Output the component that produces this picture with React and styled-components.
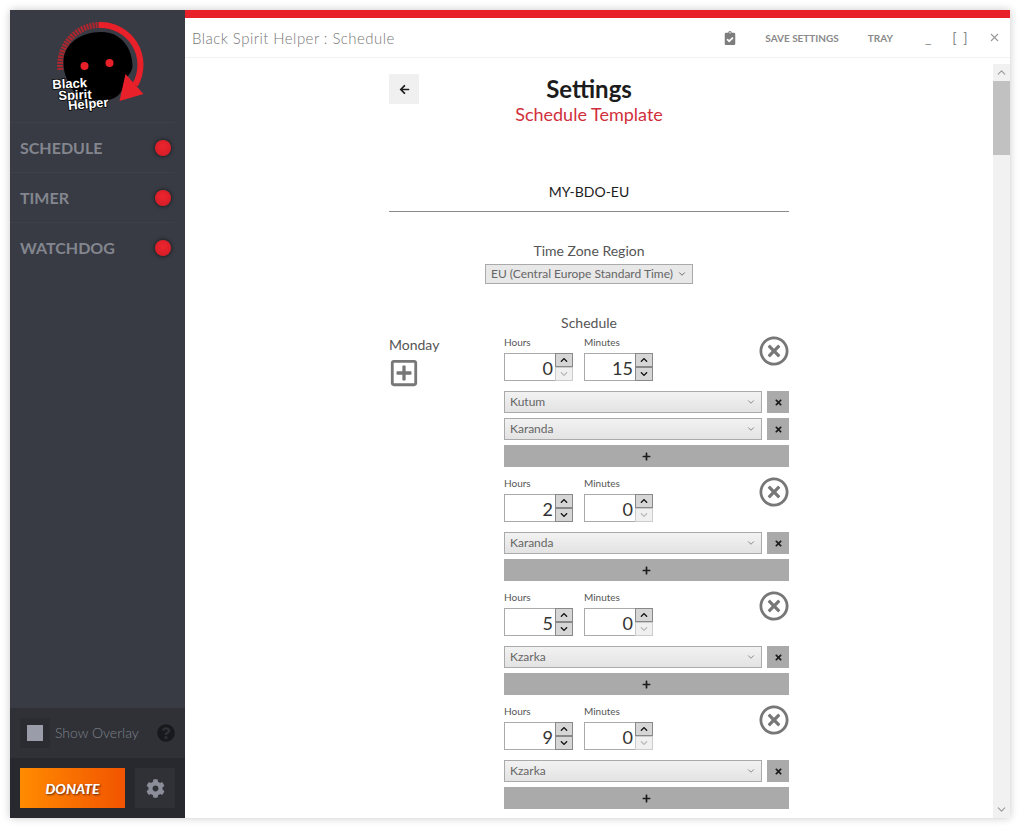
import React from 'react';
import styled, { createGlobalStyle } from 'styled-components';
import {
  FaArrowLeft, FaChevronDown, FaChevronUp, FaClipboardCheck, FaCog, FaPlus,
  FaQuestionCircle, FaRegPlusSquare, FaRegTimesCircle, FaTimes,
} from 'react-icons/fa';
import { ChevronDown, ChevronUp, X } from 'lucide-react';

const GlobalStyle = createGlobalStyle`
  html, body {
    margin: 0;
    height: 828px;
    overflow: hidden;
    background: #fff;
    font-family: Lato, "Open Sans", sans-serif;
  }
  * { box-sizing: border-box; }
`;

const Frame = styled.div`
  padding: 10px;
  height: 828px;
`;

const Win = styled.div`
  display: flex;
  height: 808px;
  background: #fff;
  box-shadow: 0 0 8px rgba(0, 0, 0, 0.22);
`;

const Sidebar = styled.aside`
  width: 175px;
  flex: none;
  display: flex;
  flex-direction: column;
  background: #383b43;
`;

const LogoBox = styled.div`
  height: 112px;
  display: flex;
  justify-content: center;
`;

const NavItem = styled.div`
  height: 50px;
  width: 165px;
  display: flex;
  align-items: center;
  padding-left: 10px;
  border-top: 1px solid #3d4048;
  font-size: 16px;
  font-weight: 700;
  color: #83868f;
`;

const Dot = styled.span`
  width: 16px;
  height: 16px;
  margin-left: auto;
  margin-right: 4px;
  border-radius: 50%;
  background: radial-gradient(circle at 50% 40%, #ec252e, #d01a24);
  box-shadow: 0 0 4px rgba(0, 0, 0, 0.7);
`;

const Spacer = styled.div`
  flex: 1;
`;

const OverlayRow = styled.div`
  height: 50px;
  display: flex;
  align-items: center;
  padding: 0 10px 1px;
  background: #2f3137;
  color: #7f828a;
  font-size: 14px;
  font-weight: 300;
`;

const CheckWrap = styled.div`
  width: 30px;
  height: 30px;
  margin-right: 5px;
  display: flex;
  align-items: center;
  justify-content: center;
  background: #2a2c31;
`;

const CheckInner = styled.div`
  width: 16px;
  height: 16px;
  background: #9a9da9;
`;

const HelpIcon = styled(FaQuestionCircle)`
  margin-left: auto;
  color: #18191c;
`;

const DonateRow = styled.div`
  height: 60px;
  display: flex;
  align-items: center;
  gap: 10px;
  padding: 0 10px;
  background: #27292e;
`;

const Donate = styled.div`
  width: 105px;
  height: 40px;
  display: flex;
  align-items: center;
  justify-content: center;
  background: linear-gradient(90deg, #ff8b00, #f25400);
  color: #fff;
  font-size: 14px;
  font-weight: 900;
  font-style: italic;
  text-shadow: 1px 1px 2px rgba(60, 20, 0, 0.8);
`;

const GearBtn = styled.div`
  width: 40px;
  height: 40px;
  display: flex;
  align-items: center;
  justify-content: center;
  background: #2f3137;
  color: #8b8e99;
`;

const Main = styled.main`
  flex: 1;
  min-width: 0;
  display: flex;
  flex-direction: column;
  border-top: 8px solid #e8202a;
`;

const TitleBar = styled.header`
  height: 40px;
  flex: none;
  display: flex;
  align-items: center;
  padding-left: 7px;
  border-bottom: 1px solid #f1f1f1;
  color: #8a8a8a;
`;

const Title = styled.div`
  font-size: 15px;
  font-weight: 300;
  letter-spacing: 0.45px;
  color: #777;
  margin-right: auto;
`;

const TitleAction = styled.span`
  font-size: 10px;
  font-weight: 700;
  color: #8a8a8a;
  margin-left: ${p => p.$gap}px;
`;

const WinGlyph = styled.span`
  font-size: 14px;
  font-weight: 400;
  letter-spacing: ${p => p.$track || 0}px;
  color: #888;
  margin-left: ${p => p.$gap}px;
`;

const ClipIcon = styled(FaClipboardCheck)`
  color: #7d7d7d;
`;

const CloseWin = styled(X)`
  color: #999;
  margin: 0 9px 0 19px;
`;

const Body = styled.div`
  flex: 1;
  min-height: 0;
  display: flex;
  overflow: hidden;
`;

const Content = styled.div`
  flex: 1;
  min-width: 0;
  display: flex;
  justify-content: center;
`;

const Column = styled.div`
  width: 400px;
  flex: none;
  padding-top: 16px;
`;

const Header = styled.div`
  height: 93px;
  position: relative;
  text-align: center;
`;

const BackBtn = styled.div`
  position: absolute;
  left: 0;
  top: 0;
  width: 30px;
  height: 30px;
  display: flex;
  align-items: center;
  justify-content: center;
  background: #f0f0f0;
  color: #1e1e1e;
`;

const PageTitle = styled.h1`
  margin: 0;
  font-size: 24px;
  line-height: 30px;
  font-weight: 700;
  color: #1c1c1c;
`;

const SubTitle = styled.div`
  font-size: 18px;
  line-height: 20px;
  color: #d0303c;
`;

const TemplateName = styled.div`
  height: 45px;
  padding-top: 13px;
  border-bottom: 1px solid #8a8a8a;
  text-align: center;
  font-size: 14px;
  line-height: 24px;
  color: #1c1c1c;
`;

const Section = styled.div`
  margin-top: 28px;
  display: flex;
  flex-direction: column;
  align-items: center;
  font-size: 14px;
  line-height: 22px;
  color: #555;
`;

const FakeSelect = styled.div`
  height: ${p => p.$h}px;
  flex: ${p => (p.$wide ? 1 : 'none')};
  display: flex;
  align-items: center;
  justify-content: space-between;
  padding: 0 5px;
  border: 1px solid #aaa;
  background: ${p => (p.$wide ? 'linear-gradient(180deg, #f2f2f2, #e3e3e3)' : '#e8e8e8')};
  color: #666;
  font-size: 12px;
  line-height: 1;
`;

const ZoneSelect = styled(FakeSelect)`
  width: 208px;
  margin-top: 2px;
  gap: 4px;
`;

const Day = styled.div`
  margin-top: 28px;
  display: flex;
`;

const DayLabel = styled.div`
  width: 115px;
  flex: none;
  padding-top: 22px;
  font-size: 14px;
  line-height: 22px;
  color: #555;
`;

const AddDay = styled(FaRegPlusSquare)`
  display: block;
  margin-top: 2px;
  color: #777;
`;

const Slots = styled.div`
  flex: 1;
  min-width: 0;
`;

const SlotsHead = styled.div`
  text-align: center;
  margin-left: -115px;
  margin-bottom: 1px;
  font-size: 14px;
  line-height: 22px;
  color: #555;
`;

const Slot = styled.div`
  margin-bottom: 9px;
`;

const TimeRow = styled.div`
  display: flex;
  align-items: flex-start;
  margin-bottom: 10px;
  gap: 11px;
`;

const TimeField = styled.div`
  width: 69px;
  font-size: 10px;
  line-height: 14px;
  color: #555;
`;

const TimeBox = styled.div`
  height: 28px;
  margin-top: 4px;
  display: flex;
  border: 1px solid #aaa;
`;

const TimeValue = styled.div`
  flex: 1;
  padding: 1px 2px 0 0;
  text-align: right;
  font-size: 18px;
  line-height: 26px;
  color: #333;
`;

const Spin = styled.div`
  width: 18px;
  flex: none;
  margin: -1px -1px -1px 0;
  display: flex;
  flex-direction: column;
`;

const SpinBtn = styled.div`
  flex: 1;
  display: flex;
  align-items: center;
  justify-content: center;
  border: 1px solid ${p => (p.$off ? '#ccc' : '#888')};
  background: ${p => (p.$off ? '#f0f0f0' : '#d6d6d6')};
  color: ${p => (p.$off ? '#bbb' : '#111')};
`;

const RemoveSlot = styled(FaRegTimesCircle)`
  margin-left: auto;
  margin-top: 1px;
  color: #777;
`;

const MobRow = styled.div`
  display: flex;
  gap: 5px;
  margin-bottom: 5px;
`;

const SmallBtn = styled.div`
  width: 22px;
  height: 22px;
  flex: none;
  display: flex;
  align-items: center;
  justify-content: center;
  background: #aaa;
  color: #1c1c1c;
`;

const AddBtn = styled.div`
  height: 22px;
  display: flex;
  align-items: center;
  justify-content: center;
  background: #aaa;
  color: #1c1c1c;
`;

const Scroll = styled.div`
  width: 17px;
  flex: none;
  margin-top: 6px;
  display: flex;
  flex-direction: column;
  background: #f1f1f1;
  color: #9a9a9a;
`;

const ScrollArrow = styled.div`
  height: 17px;
  flex: none;
  display: flex;
  align-items: center;
  justify-content: center;
`;

const Thumb = styled.div`
  height: 74px;
  background: #c1c1c1;
`;

// drawn in page coordinates, the svg sits at x 47.5, y 20
const Logo = () => (
  <svg width="100" height="100" viewBox="47.5 20 100 100" style={{ marginTop: 10 }}>
    <path d="M97 25 A40 40 0 0 0 60 70" fill="none" stroke="#b0262f" strokeWidth="6" strokeDasharray="2 1" />
    <path
      d="M100 32 C118 31 132 46 132 66 C132 72 125 78 124 82 C122 92 118 98 108 100 L80 100 C70 88 62 76 63 60 C64 44 80 32 100 32 Z"
      fill="#000"
    />
    <circle cx="84" cy="66" r="4" fill="#e8202a" />
    <circle cx="109" cy="63" r="4" fill="#e8202a" />
    <path d="M98 25 A40 40 0 0 1 134.6 85" fill="none" stroke="#e8202a" strokeWidth="6" />
    <path d="M119 101 L143 94 L125 74 Z" fill="#e8202a" />
    <g
      fontFamily="'Liberation Sans', sans-serif"
      fontSize="13"
      fontWeight="700"
      fill="#fff"
      stroke="#000"
      strokeWidth="1.5"
      paintOrder="stroke"
    >
      <text x="52" y="89" transform="rotate(-3 52 89)">Black</text>
      <text x="58" y="100" transform="rotate(-2 58 100)">Spirit</text>
      <text x="68" y="110" transform="rotate(-5 68 110)">Helper</text>
    </g>
  </svg>
);

const schedule = [
  { h: 0, m: 15, mobs: ['Kutum', 'Karanda'] },
  { h: 2, m: 0, mobs: ['Karanda'] },
  { h: 5, m: 0, mobs: ['Kzarka'] },
  { h: 9, m: 0, mobs: ['Kzarka'] },
];

const TimeInput = ({ label, value, max }) => (
  <TimeField>
    {label}
    <TimeBox>
      <TimeValue>{value}</TimeValue>
      <Spin>
        <SpinBtn $off={value >= max}><FaChevronUp size={8} /></SpinBtn>
        <SpinBtn $off={value <= 0}><FaChevronDown size={8} /></SpinBtn>
      </Spin>
    </TimeBox>
  </TimeField>
);

export default function App() {
  return (
    <>
      <GlobalStyle />
      <Frame>
        <Win>
          <Sidebar>
            <LogoBox><Logo /></LogoBox>
            {['SCHEDULE', 'TIMER', 'WATCHDOG'].map(name => (
              <NavItem key={name}>{name}<Dot /></NavItem>
            ))}
            <Spacer />
            <OverlayRow>
              <CheckWrap><CheckInner /></CheckWrap>
              Show Overlay
              <HelpIcon size={18} />
            </OverlayRow>
            <DonateRow>
              <Donate>DONATE</Donate>
              <GearBtn><FaCog size={19} /></GearBtn>
            </DonateRow>
          </Sidebar>
          <Main>
            <TitleBar>
              <Title>Black Spirit Helper : Schedule</Title>
              <ClipIcon size={14} />
              <TitleAction $gap={28}>SAVE SETTINGS</TitleAction>
              <TitleAction $gap={29}>TRAY</TitleAction>
              <WinGlyph $gap={32}>_</WinGlyph>
              <WinGlyph $gap={21} $track={1.5}>[ ]</WinGlyph>
              <CloseWin size={13} />
            </TitleBar>
            <Body>
              <Content>
                <Column>
                  <Header>
                    <BackBtn><FaArrowLeft size={11} /></BackBtn>
                    <PageTitle>Settings</PageTitle>
                    <SubTitle>Schedule Template</SubTitle>
                  </Header>
                  <TemplateName>MY-BDO-EU</TemplateName>
                  <Section>
                    Time Zone Region
                    <ZoneSelect $h={20}>
                      EU (Central Europe Standard Time)
                      <ChevronDown size={10} color="#555" />
                    </ZoneSelect>
                  </Section>
                  <Day>
                    <DayLabel>
                      Monday
                      <AddDay size={30} />
                    </DayLabel>
                    <Slots>
                      <SlotsHead>Schedule</SlotsHead>
                      {schedule.map((slot, i) => (
                        <Slot key={i}>
                          <TimeRow>
                            <TimeInput label="Hours" value={slot.h} max={23} />
                            <TimeInput label="Minutes" value={slot.m} max={59} />
                            <RemoveSlot size={30} />
                          </TimeRow>
                          {slot.mobs.map((mob, j) => (
                            <MobRow key={j}>
                              <FakeSelect $wide $h={22}>
                                {mob}
                                <ChevronDown size={10} color="#777" />
                              </FakeSelect>
                              <SmallBtn><FaTimes size={9} /></SmallBtn>
                            </MobRow>
                          ))}
                          <AddBtn><FaPlus size={9} /></AddBtn>
                        </Slot>
                      ))}
                    </Slots>
                  </Day>
                </Column>
              </Content>
              <Scroll>
                <ScrollArrow><ChevronUp size={13} /></ScrollArrow>
                <Thumb />
                <Spacer />
                <ScrollArrow><ChevronDown size={13} /></ScrollArrow>
              </Scroll>
            </Body>
          </Main>
        </Win>
      </Frame>
    </>
  );
}
